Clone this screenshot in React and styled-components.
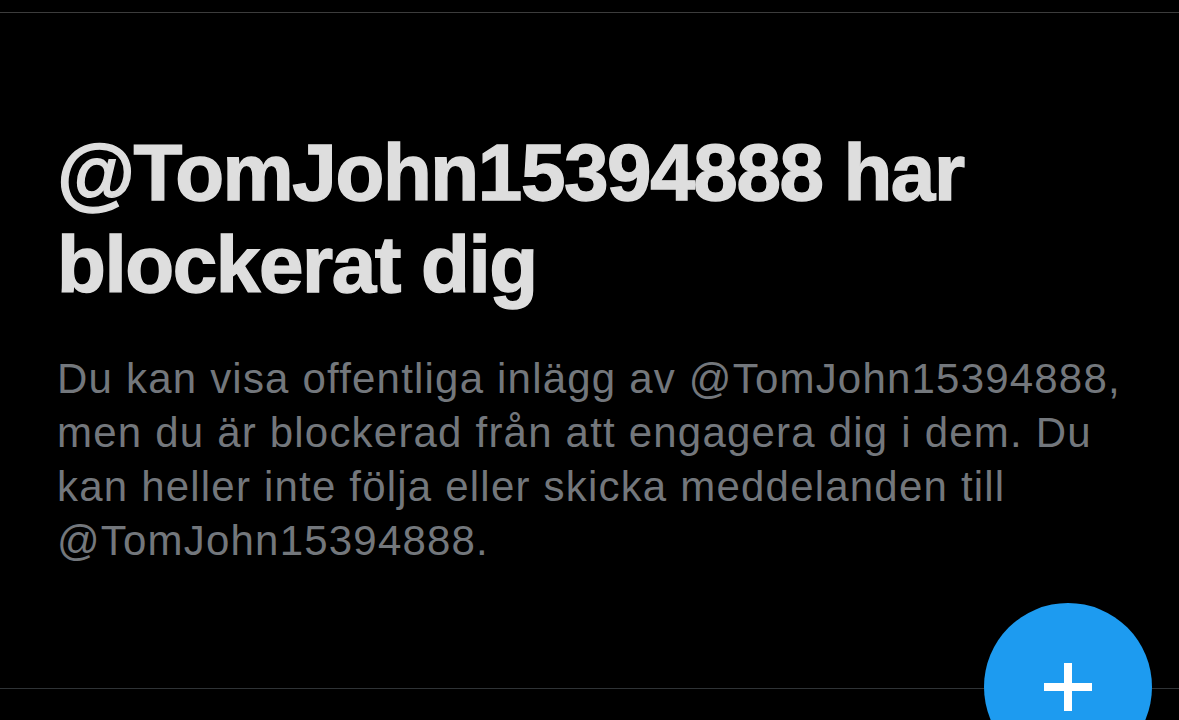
import React from 'react';
import styled, { createGlobalStyle } from 'styled-components';

const Global = createGlobalStyle`
  html, body {
    margin: 0;
    padding: 0;
    background: #000;
  }
`;

const Screen = styled.div`
  position: relative;
  width: 1179px;
  height: 720px;
  overflow: hidden;
  background: #000;
  display: flex;
  flex-direction: column;
`;

const Header = styled.div`
  height: 12px;
  border-bottom: 1px solid #3c3c3c;
`;

const Content = styled.div`
  padding: 114px 57px 0 57px;
  flex: 1;
`;

const Title = styled.h1`
  margin: 0;
  font-family: 'Liberation Sans', Arial, sans-serif;
  font-weight: 700;
  font-size: 80px;
  line-height: 92px;
  letter-spacing: -1.4px;
  color: #dedede;
  -webkit-text-stroke: 1.4px #dedede;
`;

const Body = styled.p`
  margin: 41px 0 0 0;
  font-family: 'Liberation Sans', Arial, sans-serif;
  font-weight: 400;
  font-size: 42px;
  line-height: 54px;
  letter-spacing: 1.2px;
  color: #73777c;
`;

const TabBar = styled.div`
  height: 31px;
  border-top: 1px solid #2f3336;
`;

const Fab = styled.button`
  position: absolute;
  left: 984px;
  top: 603px;
  width: 168px;
  height: 168px;
  border-radius: 50%;
  border: none;
  padding: 0;
  background: #1d9bf0;
  display: flex;
  align-items: flex-start;
  justify-content: center;
  cursor: pointer;

  svg {
    margin-top: 60px;
  }
`;

const PlusIcon = () => (
  <svg width="48" height="48" viewBox="0 0 48 48">
    <rect x="20" y="0" width="8" height="48" fill="#fff" />
    <rect x="0" y="20" width="48" height="8" fill="#fff" />
  </svg>
);

export default function App() {
  return (
    <Screen>
      <Global />
      <Header />
      <Content>
        <Title>@TomJohn15394888 har blockerat dig</Title>
        <Body>
          Du kan visa offentliga inlägg av @TomJohn15394888, men du är blockerad från att engagera dig i dem. Du kan heller inte följa eller skicka meddelanden till @TomJohn15394888.
        </Body>
      </Content>
      <TabBar />
      <Fab aria-label="Nytt inlägg">
        <PlusIcon />
      </Fab>
    </Screen>
  );
}
